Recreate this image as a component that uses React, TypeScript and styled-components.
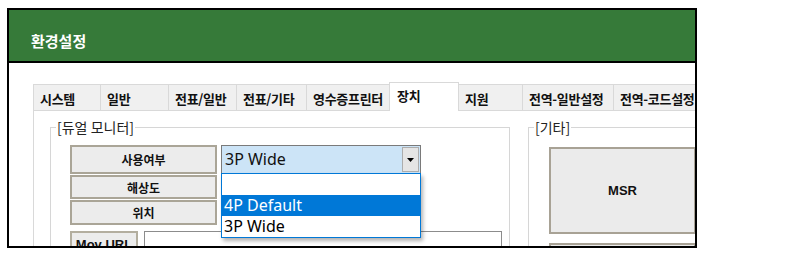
import React, {FC} from 'react';
import styled, {createGlobalStyle, css} from 'styled-components';

/*
 * Data.
 */

interface TabItem {
  label: string;
  width: number;
  active?: boolean;
}

const tabs: TabItem[] = [
  {label: '시스템', width: 68},
  {label: '일반', width: 69},
  {label: '전표/일반', width: 69},
  {label: '전표/기타', width: 71},
  {label: '영수증프린터', width: 84},
  {label: '장치', width: 70, active: true},
  {label: '지원', width: 65},
  {label: '전역-일반설정', width: 92},
  {label: '전역-코드설정', width: 92},
];

const options = ['', '4P Default', '3P Wide'];

/*
 * Style.
 */

const GlobalStyle = createGlobalStyle`
  body {
    margin: 0;
    background: #fff;
    font-family: "Noto Sans CJK KR", "Noto Sans", sans-serif;
    color: #111;
  }
`;

const StyledWindowDiv = styled.div`
  margin: 8px 0 0 7px;
  width: 690px;
  height: 240px;
  box-sizing: border-box;
  border: 2px solid #000;
  overflow: hidden;
  background: #fff;
`;

const StyledHeaderDiv = styled.div`
  height: 53px;
  box-sizing: border-box;
  padding: 10px 0 0 22px;
  display: flex;
  align-items: center;
  background: #367a39;
  border-bottom: 2px solid #000;
  color: #fff;
  font-size: 15px;
  font-weight: 700;
`;

const StyledBodyDiv = styled.div`
  padding: 19px 0 0 24px;
`;

const StyledTabBarDiv = styled.div`
  display: flex;
  align-items: flex-end;
  height: 28px;
`;

const StyledTabDiv = styled.div<{$active?: boolean}>`
  position: relative;
  flex: none;
  box-sizing: border-box;
  height: 26px;
  margin-right: -1px;
  padding: 1px 0 0 6px;
  display: flex;
  align-items: center;
  border: 1px solid #d9d9d9;
  border-bottom: none;
  background: #f0f0f0;
  font-size: 13px;
  font-weight: 700;
  letter-spacing: -0.3px;
  white-space: nowrap;
  overflow: hidden;

  ${p =>
    p.$active &&
    css`
      z-index: 1;
      height: 29px;
      margin-bottom: -1px;
      padding: 0 0 4px 7px;
      background: #fff;
    `};
`;

const StyledPanelDiv = styled.div`
  display: flex;
  gap: 18px;
  width: 720px;
  height: 200px;
  box-sizing: border-box;
  padding: 16px 0 0 16px;
  border: 1px solid #d9d9d9;
`;

const StyledGroupDiv = styled.div<{$width: number; $pad: string}>`
  position: relative;
  flex: none;
  width: ${p => p.$width}px;
  height: 220px;
  box-sizing: border-box;
  padding: ${p => p.$pad};
  border: 1px solid #d6d6d6;
`;

const StyledLegendSpan = styled.span`
  position: absolute;
  top: -11px;
  left: 5px;
  padding: 0 1px;
  background: #fff;
  font-size: 14px;
  line-height: 20px;
  color: #222;
  white-space: pre;
`;

const StyledRowsDiv = styled.div`
  display: flex;
  flex-direction: column;
  gap: 1px;
`;

const StyledRowDiv = styled.div<{$height: number}>`
  display: flex;
  gap: 4px;
  height: ${p => p.$height}px;
`;

const StyledLabelButton = styled.div`
  flex: none;
  width: 147px;
  box-sizing: border-box;
  display: flex;
  align-items: center;
  justify-content: center;
  background: #ececec;
  border: 2px solid #aaa597;
  font-size: 12px;
  font-weight: 700;
`;

const StyledSelectDiv = styled.div`
  position: relative;
  flex: none;
  width: 200px;
  box-sizing: border-box;
  display: flex;
  align-items: center;
  padding: 1px 1px 1px 3px;
  background: #cce4f7;
  border: 1px solid #7a7a7a;
  font-family: "Noto Sans", sans-serif;
  font-size: 16px;
`;

const StyledSelectValueSpan = styled.span`
  flex: 1;
  padding-bottom: 1px;
`;

const StyledArrowDiv = styled.div`
  width: 17px;
  height: 100%;
  box-sizing: border-box;
  display: flex;
  align-items: center;
  justify-content: center;
  background: #e5e5e5;
  border: 1px solid #adadad;
`;

const StyledListDiv = styled.div`
  position: absolute;
  z-index: 2;
  top: 100%;
  left: -1px;
  width: 200px;
  box-sizing: border-box;
  background: #fff;
  border: 1px solid #0078d7;
  box-shadow: 2px 3px 4px rgba(0, 0, 0, 0.3);
`;

const StyledOptionDiv = styled.div<{$selected?: boolean}>`
  height: 21px;
  padding-left: 2px;
  line-height: 21px;
  color: #000;

  ${p =>
    p.$selected &&
    css`
      background: #0078d7;
      color: #fff;
    `};
`;

const StyledUrlRowDiv = styled.div`
  display: flex;
  gap: 6px;
  margin-top: 6px;
  height: 26px;
`;

const StyledUrlButton = styled.div`
  flex: none;
  width: 68px;
  box-sizing: border-box;
  display: flex;
  align-items: center;
  justify-content: center;
  background: #ececec;
  border: 2px solid #b3ae9f;
  font-family: "Liberation Sans", Arial, sans-serif;
  font-size: 13px;
  font-weight: 700;
`;

const StyledUrlInputDiv = styled.div`
  flex: none;
  width: 358px;
  box-sizing: border-box;
  border: 1px solid #8c8c8c;
  background: #fff;
`;

const StyledBigButton = styled.div`
  width: 147px;
  height: 87px;
  box-sizing: border-box;
  display: flex;
  align-items: center;
  justify-content: center;
  background: #ebebeb;
  border: 2px solid #a8a295;
  font-family: "Liberation Sans", Arial, sans-serif;
  font-size: 13px;
  font-weight: 700;
`;

const StyledNextButton = styled(StyledBigButton)`
  margin-top: 9px;
`;

/*
 * Component.
 */

const App: FC = () => (
  <>
    <GlobalStyle />
    <StyledWindowDiv>
      <StyledHeaderDiv>환경설정</StyledHeaderDiv>
      <StyledBodyDiv>
        <StyledTabBarDiv>
          {tabs.map(tab => (
            <StyledTabDiv key={tab.label} $active={tab.active} style={{width: tab.width}}>
              {tab.label}
            </StyledTabDiv>
          ))}
        </StyledTabBarDiv>
        <StyledPanelDiv>
          <StyledGroupDiv $width={460} $pad="17px 0 0 19px">
            <StyledLegendSpan>[듀얼 모니터]</StyledLegendSpan>
            <StyledRowsDiv>
              <StyledRowDiv $height={29}>
                <StyledLabelButton>사용여부</StyledLabelButton>
                <StyledSelectDiv>
                  <StyledSelectValueSpan>3P Wide</StyledSelectValueSpan>
                  <StyledArrowDiv>
                    <svg width="7" height="4" viewBox="0 0 7 4">
                      <polygon points="0,0 7,0 3.5,4" fill="#000" />
                    </svg>
                  </StyledArrowDiv>
                  <StyledListDiv>
                    {options.map((option, index) => (
                      <StyledOptionDiv key={index} $selected={option === '4P Default'}>
                        {option}
                      </StyledOptionDiv>
                    ))}
                  </StyledListDiv>
                </StyledSelectDiv>
              </StyledRowDiv>
              <StyledRowDiv $height={24}>
                <StyledLabelButton>해상도</StyledLabelButton>
              </StyledRowDiv>
              <StyledRowDiv $height={25}>
                <StyledLabelButton>위치</StyledLabelButton>
              </StyledRowDiv>
            </StyledRowsDiv>
            <StyledUrlRowDiv>
              <StyledUrlButton>Mov URL</StyledUrlButton>
              <StyledUrlInputDiv />
            </StyledUrlRowDiv>
          </StyledGroupDiv>
          <StyledGroupDiv $width={200} $pad="19px 0 0 20px">
            <StyledLegendSpan>[기타]</StyledLegendSpan>
            <StyledBigButton>MSR</StyledBigButton>
            <StyledNextButton />
          </StyledGroupDiv>
        </StyledPanelDiv>
      </StyledBodyDiv>
    </StyledWindowDiv>
  </>
);

export default App;
